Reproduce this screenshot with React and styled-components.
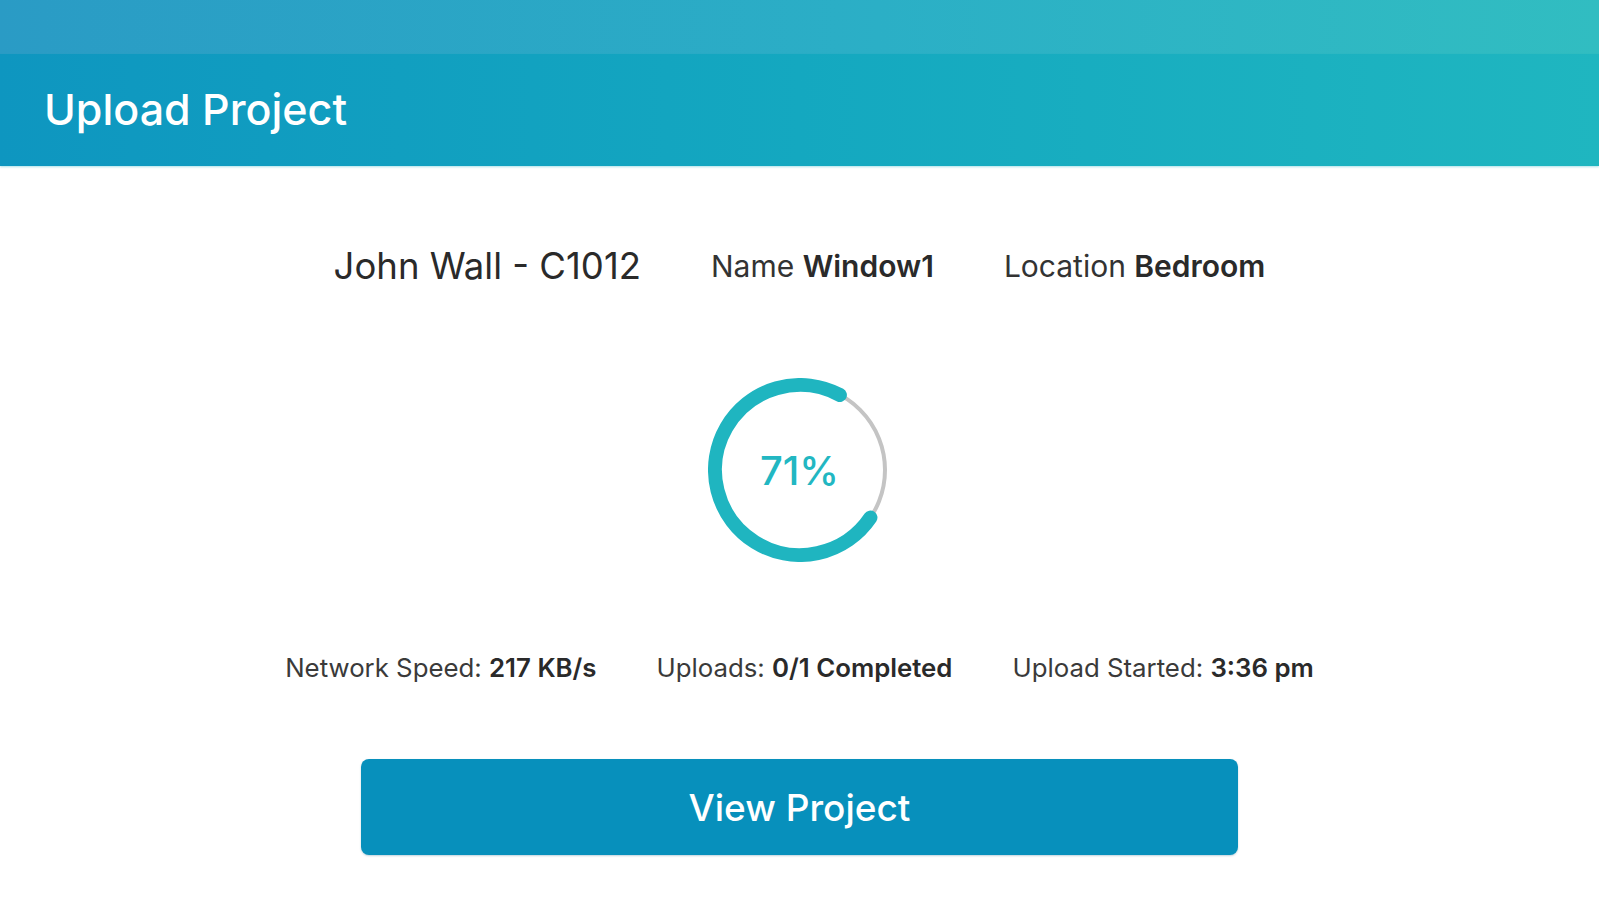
import styled, { createGlobalStyle } from 'styled-components'

const Global = createGlobalStyle`
  body {
    margin: 0;
    background: #ffffff;
    font-family: Inter, "Noto Sans", sans-serif;
    color: #2e2e2e;
  }
`

const Page = styled.div`
  display: flex;
  flex-direction: column;
  width: 100%;
  min-height: 900px;
`

const StatusStrip = styled.div`
  height: 54px;
  background: linear-gradient(90deg, #2a9bc5 0%, #2bafc6 55%, #31bdc1 100%);
`

const Header = styled.header`
  display: flex;
  align-items: center;
  height: 112px;
  padding: 0 44px;
  background: linear-gradient(90deg, #0e96c0 0%, #14a8c0 50%, #1fb6c0 100%);
  box-shadow: 0 1px 2px rgba(20, 170, 190, 0.35);
`

const Title = styled.h1`
  margin: 0 0 3px;
  font-size: 43px;
  font-weight: 500;
  color: #ffffff;
`

const Body = styled.main`
  display: flex;
  flex-direction: column;
  align-items: center;
  padding-top: 80px;
`

const InfoRow = styled.div`
  display: flex;
  align-items: center;
  gap: 70px;
  height: 40px;
`

const Customer = styled.span`
  font-size: 36.5px;
  font-weight: 400;
  color: #2a2a2a;
`

const Field = styled.span`
  font-size: 30px;
  font-weight: 400;
  color: #333;

  b {
    font-weight: 600;
    color: #2a2a2a;
  }
`

const Ring = styled.div`
  position: relative;
  width: 184px;
  height: 184px;
  margin-top: 92px;
`

const Percent = styled.span`
  position: absolute;
  inset: 0;
  display: flex;
  align-items: center;
  justify-content: center;
  font-size: 40px;
  font-weight: 500;
  color: #22b7c2;
`

const StatsRow = styled.div`
  display: flex;
  align-items: center;
  gap: 60px;
  height: 30px;
  margin-top: 90px;
`

const Stat = styled.span`
  font-size: 25.8px;
  color: #3a3a3a;

  b {
    font-weight: 600;
    color: #2a2a2a;
  }
`

const ViewButton = styled.button`
  width: 877px;
  height: 96px;
  margin-top: 77px;
  border: none;
  border-radius: 8px;
  background: #0790bc;
  color: #ffffff;
  font-family: inherit;
  font-size: 37px;
  font-weight: 500;
  box-shadow: 0 1px 2px rgba(0, 80, 120, 0.25);
  cursor: pointer;
`

const point = (deg, r, c) => {
  const a = (deg * Math.PI) / 180
  return [c + r * Math.sin(a), c - r * Math.cos(a)]
}

const Progress = ({ label }) => {
  const c = 92
  const r = 85
  const [sx, sy] = point(124, r, c)
  const [ex, ey] = point(388, r, c)
  return (
    <Ring>
      <svg width='184' height='184' viewBox='0 0 184 184'>
        <circle cx={c} cy={c} r={r} fill='none' stroke='#c4c4c4' strokeWidth='4' />
        <path
          d={`M ${sx} ${sy} A ${r} ${r} 0 1 1 ${ex} ${ey}`}
          fill='none'
          stroke='#1fb5c0'
          strokeWidth='14'
          strokeLinecap='round'
        />
      </svg>
      <Percent>{label}</Percent>
    </Ring>
  )
}

const App = () => {
  return (
    <Page>
      <Global />
      <StatusStrip />
      <Header>
        <Title>Upload Project</Title>
      </Header>
      <Body>
        <InfoRow>
          <Customer>John Wall - C1012</Customer>
          <Field>Name <b>Window1</b></Field>
          <Field>Location <b>Bedroom</b></Field>
        </InfoRow>
        <Progress label='71%' />
        <StatsRow>
          <Stat>Network Speed: <b>217 KB/s</b></Stat>
          <Stat>Uploads: <b>0/1 Completed</b></Stat>
          <Stat>Upload Started: <b>3:36 pm</b></Stat>
        </StatsRow>
        <ViewButton>View Project</ViewButton>
      </Body>
    </Page>
  )
}

export default App
